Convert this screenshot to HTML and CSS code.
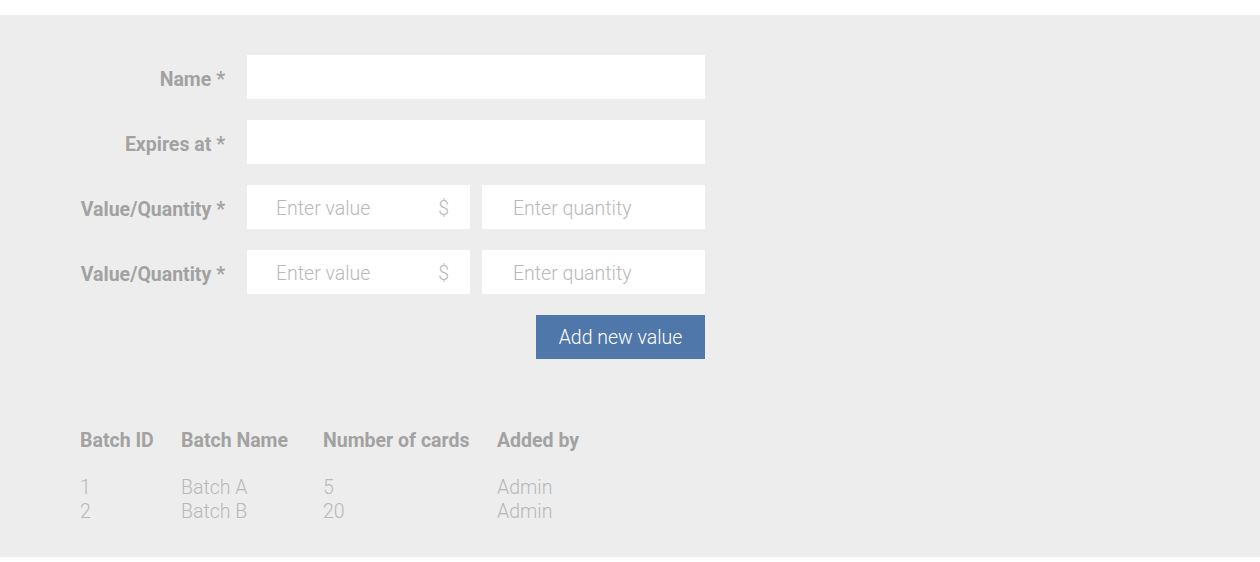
FILE: index.html
```html
<!DOCTYPE html>
<html>
<head>
<meta charset="utf-8">
<link rel="stylesheet" href="styles.css">
</head>
<body>
<div class="panel">
  <form class="form">
    <div class="row">
      <label class="label">Name *</label>
      <div class="field full"></div>
    </div>
    <div class="row">
      <label class="label">Expires at *</label>
      <div class="field full"></div>
    </div>
    <div class="row">
      <label class="label">Value/Quantity *</label>
      <div class="pair">
        <div class="field half value"><span class="ph">Enter value</span><span class="cur">$</span></div>
        <div class="field half qty"><span class="ph">Enter quantity</span></div>
      </div>
    </div>
    <div class="row">
      <label class="label">Value/Quantity *</label>
      <div class="pair">
        <div class="field half value"><span class="ph">Enter value</span><span class="cur">$</span></div>
        <div class="field half qty"><span class="ph">Enter quantity</span></div>
      </div>
    </div>
    <div class="row actions">
      <div class="label"></div>
      <div class="btnwrap"><button type="button" class="btn">Add new value</button></div>
    </div>
  </form>
  <div class="table">
    <div class="th">Batch ID</div>
    <div class="th">Batch Name</div>
    <div class="th">Number of cards</div>
    <div class="th">Added by</div>
    <div class="gap"></div>
    <div class="td">1</div>
    <div class="td">Batch A</div>
    <div class="td">5</div>
    <div class="td">Admin</div>
    <div class="td">2</div>
    <div class="td">Batch B</div>
    <div class="td">20</div>
    <div class="td">Admin</div>
  </div>
</div>
</body>
</html>
```
FILE: styles.css
```css
html, body {
  margin: 0;
  padding: 0;
  background: #ffffff;
  font-family: Roboto, "Liberation Sans", sans-serif;
}
body {
  padding-top: 15px;
}
.panel {
  background: #ededed;
  height: 542px;
  box-sizing: border-box;
  padding: 40px 0 0 80px;
}
.form {
  display: flex;
  flex-direction: column;
  gap: 21px;
  width: 625px;
}
.row {
  display: flex;
  align-items: center;
  height: 44px;
}
.label {
  width: 145px;
  margin-right: 22px;
  text-align: right;
  font-weight: 700;
  font-size: 19.5px;
  color: #a2a2a2;
  flex: none;
  white-space: nowrap;
  padding-top: 5px;
}
.field {
  background: #ffffff;
  height: 44px;
  box-sizing: border-box;
  display: flex;
  align-items: center;
  padding-top: 3px;
}
.full {
  width: 458px;
}
.pair {
  display: flex;
  gap: 12px;
}
.half {
  width: 223px;
}
.value {
  padding-left: 29px;
  padding-right: 21px;
  justify-content: space-between;
}
.qty {
  padding-left: 31px;
}
.ph, .cur {
  font-weight: 300;
  font-size: 19.5px;
  color: #b8b8b8;
}
.btnwrap {
  width: 458px;
  display: flex;
  justify-content: flex-end;
}
.btn {
  width: 169px;
  height: 44px;
  border: none;
  background: #4f77a9;
  color: #ffffff;
  font-family: Roboto, "Liberation Sans", sans-serif;
  font-weight: 300;
  font-size: 19.5px;
  padding: 1px 0 0;
}
.table {
  margin-top: 70px;
  display: grid;
  grid-template-columns: 101px 142px 174px auto;
  justify-content: start;
  line-height: 24px;
}
.th {
  font-weight: 700;
  font-size: 19.5px;
  color: #a2a2a2;
}
.gap {
  grid-column: 1 / -1;
  height: 23px;
}
.td {
  font-weight: 300;
  font-size: 19.5px;
  color: #b8b8b8;
}
```
